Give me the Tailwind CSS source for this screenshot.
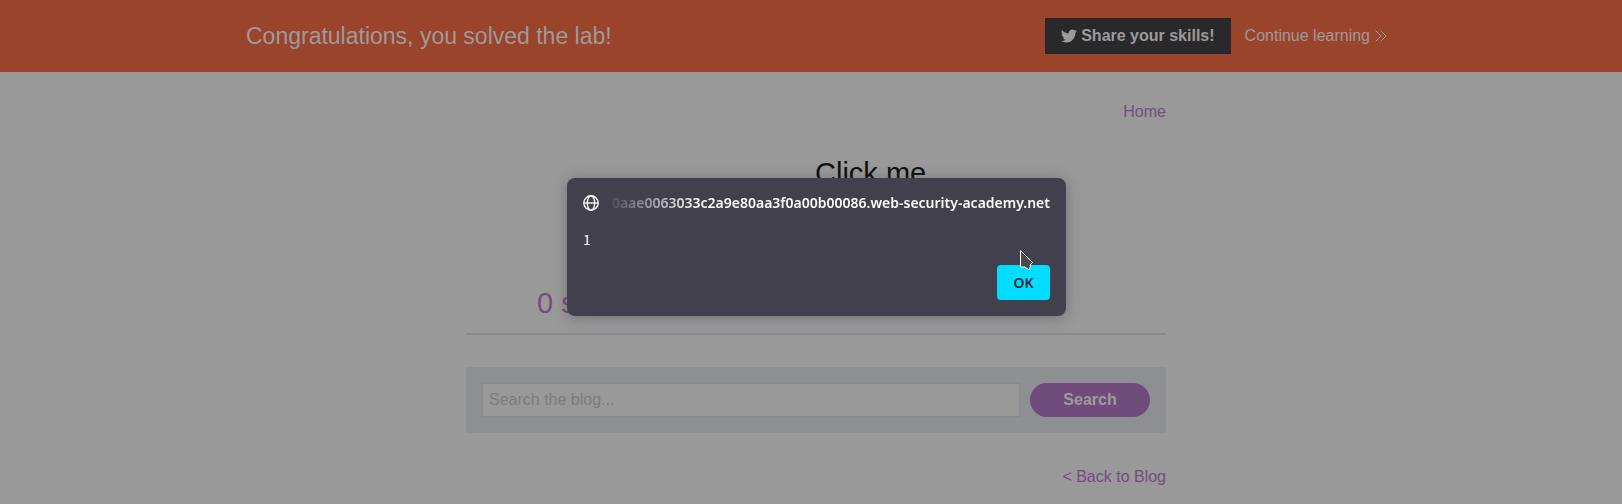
<!DOCTYPE html>
<html lang="en">
<head>
<meta charset="utf-8">
<meta name="viewport" content="width=device-width, initial-scale=1">
<title>Search the blog</title>
<script src="https://cdn.jsdelivr.net/npm/@tailwindcss/browser@4"></script>
</head>
<body class="min-h-screen bg-[#99999a] font-['Liberation_Sans',Arial,sans-serif] text-base text-[#0e0e10]">
<header class="bg-[#9a442c] text-[#9d9a9b]">
  <div class="mx-auto flex h-[72px] max-w-[1152px] items-center justify-between pl-[11px]">
    <h2 class="text-[23px]">Congratulations, you solved the lab!</h2>
    <div class="flex items-center gap-3.5">
      <button class="flex h-9 items-center gap-1 bg-[#29292b] px-4 font-bold">
        <svg class="size-4" viewBox="0 0 24 24" fill="currentColor" aria-hidden="true"><path d="M23.95 4.57a10 10 0 0 1-2.82.77 4.96 4.96 0 0 0 2.16-2.72c-.95.55-2 .95-3.13 1.18a4.92 4.92 0 0 0-8.38 4.48A13.93 13.93 0 0 1 1.64 3.16a4.93 4.93 0 0 0 1.52 6.57 4.9 4.9 0 0 1-2.23-.61v.06a4.92 4.92 0 0 0 3.95 4.83 5 5 0 0 1-2.21.08 4.94 4.94 0 0 0 4.6 3.42A9.87 9.87 0 0 1 0 19.54a13.99 13.99 0 0 0 7.55 2.21c9.05 0 14-7.5 14-13.99 0-.21 0-.42-.02-.63a9.94 9.94 0 0 0 2.42-2.56z"/></svg>
        Share your skills!
      </button>
      <a href="#" class="flex items-center gap-[5px]">Continue learning
        <svg class="h-3.5 w-3" viewBox="0 0 12 14" fill="none" stroke="currentColor" aria-hidden="true"><path d="M.5 1.500 6 7 .5 12.500M5.500 1.500 11 7l-5.500 5.500"/></svg>
      </a>
    </div>
  </div>
</header>
<main class="pl-[10px]">
  <div class="mx-auto flex max-w-[700px] flex-col pt-7">
    <nav class="text-right leading-6"><a href="#" class="text-[#744c7e]">Home</a></nav>
    <p class="mt-[33px] pl-[349px] text-[29px] leading-8">Click me</p>
    <div class="mt-24 border-b-2 border-[#8a8a8c] pb-3 pl-[71px]">
      <h1 class="text-[29px] leading-9 text-[#744c7e]">0 search results</h1>
    </div>
    <form class="mt-8 flex items-center gap-2.5 bg-[#8d8f92] p-4">
      <input type="text" aria-label="Search the blog" placeholder="Search the blog..." class="h-[34px] min-w-0 flex-1 border border-[#89898a] bg-[#99999a] px-1.5 placeholder:text-[#7c7c7d]">
      <button type="button" class="h-[34px] w-[120px] rounded-full bg-[#704c7c] font-bold text-[#9d9a9e]">Search</button>
    </form>
    <a href="#" class="mt-8 self-end leading-6 text-[#744c7e]">&lt; Back to Blog</a>
  </div>
</main>
<div role="dialog" aria-modal="true" class="absolute top-[178px] left-1/2 ml-[-244px] w-[499px] rounded-lg bg-[#42404d] p-4 font-['Noto_Sans',sans-serif] text-sm text-[#fbfbfe] shadow-[0_2px_14px_rgba(58,57,68,0.4)]">
  <div class="flex h-[17px] items-center gap-1">
    <svg class="size-4 shrink-0" viewBox="0 0 16 16" fill="none" stroke="currentColor" stroke-width="1.400" aria-hidden="true"><circle cx="8" cy="8" r="7.200"/><ellipse cx="8" cy="8" rx="3.700" ry="7.200"/><path d="M1 8h14"/></svg>
    <div class="flex min-w-0 flex-1 justify-end overflow-hidden font-semibold whitespace-nowrap [mask-image:linear-gradient(to_right,transparent,black_96px)]">0aae0063033c2a9e80aa3f0a00b00086.web-security-academy.net</div>
  </div>
  <p class="mt-[18px] font-['Noto_Sans_CJK_JP',sans-serif]">1</p>
  <div class="mt-4 flex justify-end">
    <button class="h-[35px] w-[53px] rounded bg-[#00ddff] font-semibold text-[#2b2a33]">OK</button>
  </div>
</div>
<svg class="pointer-events-none absolute top-[249px] left-1/2 ml-[208px] h-[23px] w-[15px]" viewBox="0 0 15 23" fill="#4a4a4a" stroke="#fff" aria-hidden="true"><path d="M1.500 1.500v16.500h4.500l4 3 1.500-3.500-.5-1.500 2.500-2.500z"/></svg>
</body>
</html>
